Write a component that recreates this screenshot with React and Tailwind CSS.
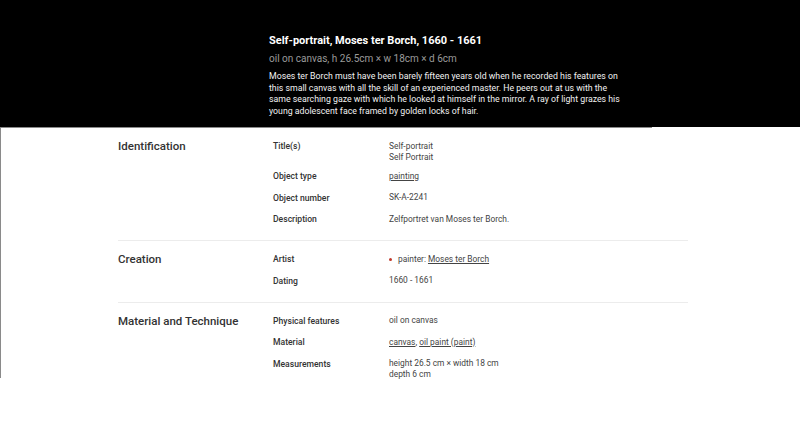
import React from 'react';

const sections = [
  {
    heading: 'Identification',
    rows: [
      { label: 'Title(s)', lines: ['Self-portrait', 'Self Portrait'] },
      { label: 'Object type', links: ['painting'] },
      { label: 'Object number', lines: ['SK-A-2241'] },
      { label: 'Description', lines: ['Zelfportret van Moses ter Borch.'] },
    ],
  },
  {
    heading: 'Creation',
    rows: [
      { label: 'Artist', artist: true },
      { label: 'Dating', lines: ['1660 - 1661'] },
    ],
  },
  {
    heading: 'Material and Technique',
    rows: [
      { label: 'Physical features', lines: ['oil on canvas'] },
      { label: 'Material', links: ['canvas', 'oil paint (paint)'] },
      { label: 'Measurements', lines: ['height 26.5 cm × width 18 cm', 'depth 6 cm'] },
    ],
  },
];

const intro = [
  'Moses ter Borch must have been barely fifteen years old when he recorded his features on',
  'this small canvas with all the skill of an experienced master. He peers out at us with the',
  'same searching gaze with which he looked at himself in the mirror. A ray of light grazes his',
  'young adolescent face framed by golden locks of hair.',
];

const Value = ({ row }) => {
  if (row.artist) {
    return (
      <div className="flex items-center">
        <span className="w-[3px] h-[3px] rounded-full bg-[#c0392b] mr-[6px]" />
        <span>painter: </span>
        <a className="underline ml-[2px]">Moses ter Borch</a>
      </div>
    );
  }
  if (row.links) {
    return (
      <div>
        {row.links.map((l, i) => (
          <span key={l}>
            <a className="underline">{l}</a>
            {i < row.links.length - 1 && ', '}
          </span>
        ))}
      </div>
    );
  }
  return row.lines.map((l) => <div key={l}>{l}</div>);
};

const App = () => {
  return (
    <div className="w-[800px] h-[427px] bg-white overflow-hidden font-['Roboto',sans-serif]">
      <div className="bg-black h-[127px] pl-[269px] pt-[34px]">
        <h1 className="text-white text-[11px] font-bold leading-[14px]">
          Self-portrait, Moses ter Borch, 1660 - 1661
        </h1>
        <p className="text-[#9a9a9a] text-[10px] leading-[12px] mt-[5px]">
          oil on canvas, h 26.5cm × w 18cm × d 6cm
        </p>
        <p className="text-[#f2f2f2] text-[8.75px] leading-[11.5px] mt-[6px] whitespace-nowrap">
          {intro.map((l) => (
            <span key={l} className="block">{l}</span>
          ))}
        </p>
      </div>
      <div className="w-[652px] h-[251px] border-l border-t border-[#8a8a8a]">
        <div className="w-[570px] ml-[117px]">
          {sections.map((s, i) => (
            <div
              key={s.heading}
              className={
                'flex pt-[10px] pb-[13px] ' + (i < sections.length - 1 ? 'border-b border-[#ececec]' : '')
              }
            >
              <h2 className="w-[155px] shrink-0 text-[11.5px] font-medium text-[#333] leading-[16px]">
                {s.heading}
              </h2>
              <div className="flex flex-col gap-[5.5px]">
                {s.rows.map((r) => (
                  <div key={r.label} className="flex">
                    <div className="w-[116px] shrink-0 text-[8.6px] font-medium text-[#333] leading-[16px]">
                      {r.label}
                    </div>
                    <div className="text-[8.4px] text-[#444] leading-[11px] pt-[2.5px]">
                      <Value row={r} />
                    </div>
                  </div>
                ))}
              </div>
            </div>
          ))}
        </div>
      </div>
    </div>
  );
};

export default App;
